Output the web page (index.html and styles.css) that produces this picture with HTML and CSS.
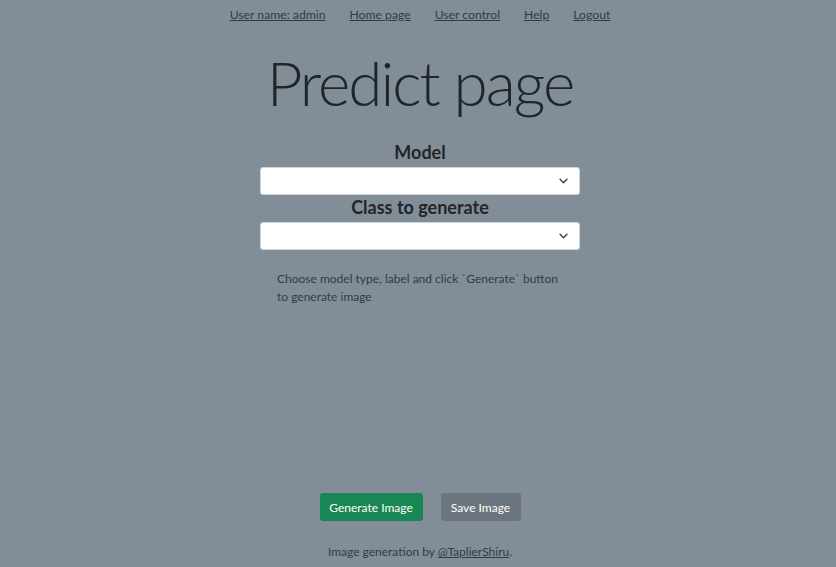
FILE: index.html
```html
<!DOCTYPE html>
<html>
<head>
<meta charset="utf-8">
<link rel="stylesheet" href="styles.css">
</head>
<body>
<div class="page">
  <nav class="topnav">
    <a href="#">User name: admin</a>
    <a href="#">Home page</a>
    <a href="#">User control</a>
    <a href="#">Help</a>
    <a href="#">Logout</a>
  </nav>
  <h1 class="title">Predict page</h1>
  <div class="form">
    <label class="label">Model</label>
    <div class="select"><svg width="9" height="6" viewBox="0 0 9 6"><path d="M1 1.2l3.5 3.5 3.5-3.5" fill="none" stroke="#343a40" stroke-width="1.3" stroke-linecap="round" stroke-linejoin="round"/></svg></div>
    <label class="label">Class to generate</label>
    <div class="select"><svg width="9" height="6" viewBox="0 0 9 6"><path d="M1 1.2l3.5 3.5 3.5-3.5" fill="none" stroke="#343a40" stroke-width="1.3" stroke-linecap="round" stroke-linejoin="round"/></svg></div>
  </div>
  <p class="hint">Choose model type, label and click `Generate` button to generate image</p>
  <div class="spacer"></div>
  <div class="buttons">
    <button class="btn btn-green">Generate Image</button>
    <button class="btn btn-gray">Save Image</button>
  </div>
  <footer class="foot">Image generation by <a href="#">@TaplierShiru</a>.</footer>
</div>
</body>
</html>
```
FILE: styles.css
```css
html, body {
  margin: 0;
  padding: 0;
  height: 100%;
}
body {
  background: #818e98;
  color: #212529;
  font-family: Lato, "Noto Sans", sans-serif;
}
.page {
  box-sizing: border-box;
  height: 567px;
  padding-left: 4px;
  display: flex;
  flex-direction: column;
  align-items: center;
}
.topnav {
  display: flex;
  gap: 24px;
  padding-top: 6px;
  font-size: 12.2px;
  line-height: 18px;
}
.topnav a {
  color: #343a40;
  text-decoration: underline;
}
.title {
  margin: 22px 0 0;
  font-family: Lato, sans-serif;
  font-weight: 300;
  font-size: 62px;
  letter-spacing: -2px;
  line-height: 72px;
  color: #212529;
}
.form {
  margin-top: 22px;
  width: 320px;
  display: flex;
  flex-direction: column;
  align-items: center;
}
.label {
  font-size: 18px;
  font-weight: 700;
  line-height: 24px;
  margin-bottom: 3px;
  color: #212529;
}
.select {
  box-sizing: border-box;
  width: 320px;
  height: 28px;
  background: #fff;
  border: 1px solid #ced4da;
  border-radius: 3px;
  display: flex;
  align-items: center;
  justify-content: flex-end;
  padding-right: 11px;
}
.hint {
  box-sizing: border-box;
  width: 286px;
  margin: 20px 0 0;
  font-size: 12px;
  line-height: 18px;
  color: #343a40;
}
.spacer {
  flex: 1;
}
.buttons {
  display: flex;
  gap: 18px;
}
.btn {
  font-family: inherit;
  font-size: 12px;
  height: 28px;
  border: none;
  border-radius: 3px;
  color: #fff;
  padding: 0;
  white-space: nowrap;
}
.btn-green {
  background: #198754;
  width: 103px;
}
.btn-gray {
  background: #6c757d;
  width: 80px;
}
.foot {
  margin: 22px 0 6px;
  font-size: 12px;
  line-height: 18px;
  color: #343a40;
}
.foot a {
  color: #343a40;
}
```
